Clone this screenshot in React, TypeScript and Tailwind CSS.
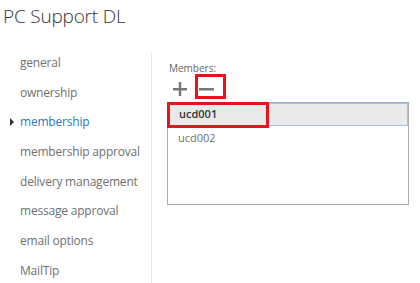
import React from "react";

const items = [
  "general",
  "ownership",
  "membership",
  "membership approval",
  "delivery management",
  "message approval",
  "email options",
  "MailTip",
];

export default function App() {
  return (
    <div
      className="w-[420px] h-[283px] bg-white overflow-hidden relative"
      style={{ fontFamily: '"Open Sans", "Noto Sans", sans-serif' }}
    >
      <div className="pl-[3px] pt-[3px] text-[19px] font-light text-[#333] leading-[26px] tracking-[-0.2px]">
        PC Support DL
      </div>
      <div className="flex mt-[18px]">
        <div className="w-[151px] pt-[1px]">
          {items.map((t) => (
            <div
              key={t}
              className={`relative h-[29.7px] flex items-center pl-[20px] text-[12px] tracking-[-0.2px] ${
                t === "membership" ? "text-[#2a78c8]" : "text-[#707070]"
              }`}
            >
              {t === "membership" && (
                <span className="absolute left-[10px] top-[11px] w-0 h-0 border-y-[4px] border-y-transparent border-l-[4px] border-l-[#333]" />
              )}
              {t}
            </div>
          ))}
        </div>
        <div className="w-px h-[240px] mt-[6px] bg-[#e6e6e6]" />
        <div className="pl-[15px] pt-[14px] flex-1">
          <div className="text-[10px] text-[#666] leading-[14px] pl-[2px]">Members:</div>
          <div className="relative flex items-center h-[26px] mt-[1px] pl-[6px] gap-[12px]">
            <svg width="14" height="14" viewBox="0 0 14 14">
              <rect x="0" y="6" width="14" height="2.5" fill="#777" />
              <rect x="5.75" y="0" width="2.5" height="14" fill="#777" />
            </svg>
            <svg width="15" height="14" viewBox="0 0 15 14">
              <rect x="0" y="6" width="15" height="2.5" fill="#777" />
            </svg>
            <div className="absolute left-[28px] top-[-2px] w-[31px] h-[25px] border-[3px] border-[#e8141a]" />
          </div>
          <div className="relative w-[242px] h-[103px] border border-[#abadb3]">
            <div className="h-[23px] bg-[#e9e9e9] border border-[#9ec3f0] flex items-center pl-[10px] text-[11px] font-semibold text-[#333]">
              ucd001
            </div>
            <div className="h-[24px] flex items-center pl-[10px] text-[11px] text-[#707070]">ucd002</div>
            <div className="absolute left-[-1px] top-[-1px] w-[102px] h-[26px] border-[3px] border-[#e8141a]" />
          </div>
        </div>
      </div>
    </div>
  );
}
